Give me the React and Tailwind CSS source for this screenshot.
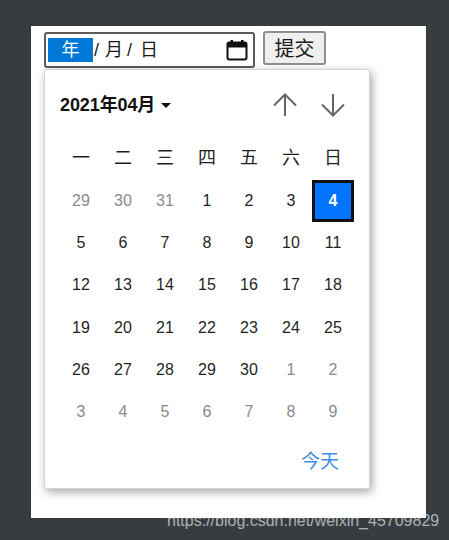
const font = { fontFamily: '"Liberation Sans", "Noto Sans CJK SC", sans-serif' }

const weekdays = ['一', '二', '三', '四', '五', '六', '日']
const days = [
  [29, 1], [30, 1], [31, 1], [1], [2], [3], [4, 0, 1],
  [5], [6], [7], [8], [9], [10], [11],
  [12], [13], [14], [15], [16], [17], [18],
  [19], [20], [21], [22], [23], [24], [25],
  [26], [27], [28], [29], [30], [1, 1], [2, 1],
  [3, 1], [4, 1], [5, 1], [6, 1], [7, 1], [8, 1], [9, 1],
]

function CalendarIcon() {
  return (
    <svg width="22" height="22" viewBox="0 0 22 22" fill="none">
      <rect x="1.5" y="3.5" width="19" height="17" rx="2" stroke="#111" strokeWidth="2" />
      <rect x="1" y="3.5" width="20" height="5" fill="#111" />
      <rect x="4.5" y="1" width="2.5" height="3" fill="#111" />
      <rect x="15" y="1" width="2.5" height="3" fill="#111" />
    </svg>
  )
}

function Arrow({ down }) {
  return (
    <svg width="26" height="26" viewBox="0 0 26 26" fill="none" stroke="#666" strokeWidth="2" className={down ? 'rotate-180' : ''}>
      <path d="M13 24V2.5M2 13.5 13 2.5l11 11" />
    </svg>
  )
}

export default function App() {
  return (
    <div className="h-[540px] w-[449px] overflow-hidden bg-[#373c40] pt-[26px] pl-[31px]" style={font}>
      <div className="relative h-[492px] w-[395px] bg-white pt-[6px] pl-[13px]">
        <div className="flex items-start gap-2">
          <div className="flex h-[36px] w-[211px] items-center rounded-[3px] border-2 border-[#5c5c5c] bg-white pr-[5px] pl-[2px] text-[18px] leading-none text-[#1a1a1a]">
            <span className="flex h-[24px] w-[45px] items-center justify-center bg-[#0078d7] text-white">年</span>
            <span className="ml-[1px]">/</span>
            <span className="ml-[6px]">月</span>
            <span className="ml-[4px]">/</span>
            <span className="ml-[8px]">日</span>
            <span className="ml-auto flex"><CalendarIcon /></span>
          </div>
          <button className="-mt-px flex h-[34px] w-[63px] items-center justify-center rounded-[3px] border-2 border-[#8f8f8f] bg-[#efefef] pt-px text-[20px] text-[#1a1a1a]">提交</button>
        </div>

        <div className="absolute top-[43px] left-[13px] h-[420px] w-[326px] rounded-[2px] border border-[#d4d4d4] bg-white px-[15px] shadow-[2px_3px_10px_rgba(0,0,0,0.35)]">
          <div className="flex h-[69px] items-center justify-between pt-[1px]">
            <div className="flex items-center gap-[6px] text-[18px] font-bold tracking-[-0.1px] text-[#111]">
              2021年04月
              <span className="h-0 w-0 border-x-[5px] border-t-[5px] border-x-transparent border-t-[#111]" />
            </div>
            <div className="flex items-center gap-[22px] pr-[8px]">
              <Arrow />
              <Arrow down />
            </div>
          </div>
          <div className="-mt-[2px] grid auto-rows-[42.2px] grid-cols-[repeat(7,42px)] grid-rows-[43px] text-[16px] text-[#1f1f1f]">
            {weekdays.map((d) => (
              <div key={d} className="flex items-center justify-center text-[18px]">{d}</div>
            ))}
            {days.map(([n, muted, active], i) => (
              <div
                key={i}
                className={
                  active
                    ? 'flex items-center justify-center border-[3px] border-[#111] bg-[#0073ff] font-bold text-white'
                    : muted
                      ? 'flex items-center justify-center text-[#8a8a8a]'
                      : 'flex items-center justify-center'
                }
              >
                {n}
              </div>
            ))}
          </div>
          <div className="mt-[17px] flex justify-end pr-[15px] text-[19px] leading-[24px] text-[#3f8fe0]">今天</div>
        </div>
      </div>
      <div className="absolute top-[511px] left-[167px] text-[16px] leading-[20px] whitespace-nowrap text-[#ffffff]/60">https://blog.csdn.net/weixin_45709829</div>
    </div>
  )
}
